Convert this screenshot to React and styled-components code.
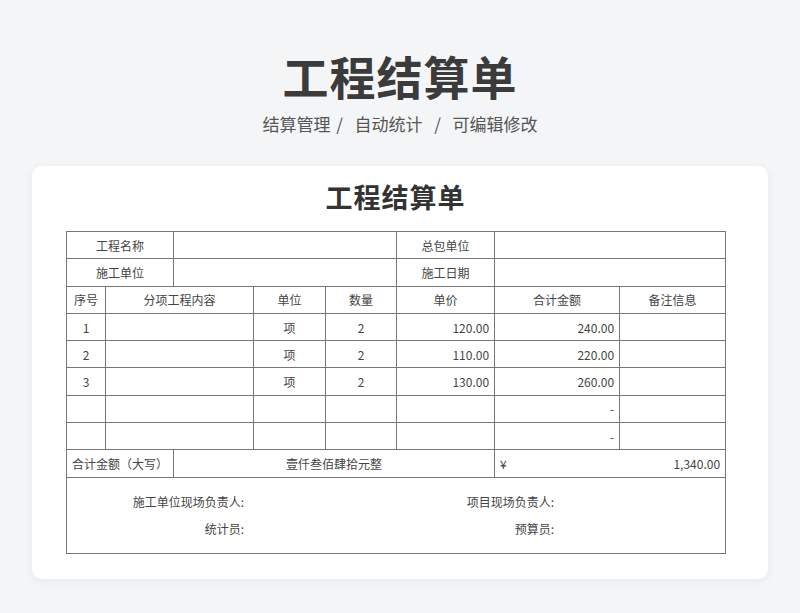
import styled, { createGlobalStyle } from 'styled-components';

const Global = createGlobalStyle`
  body { margin: 0; background: #f4f5f6; font-family: "Noto Sans CJK SC", "Noto Sans", sans-serif; }
`;

const Page = styled.div`
  width: 800px;
  height: 613px;
  display: flex;
  flex-direction: column;
  align-items: center;
  box-sizing: border-box;
  padding-top: 46px;
`;

const Title = styled.h1`
  margin: 0;
  font-size: 46px;
  line-height: 58px;
  font-weight: 700;
  color: #3b3b3b;
  letter-spacing: 1px;
`;

const Subtitle = styled.div`
  margin-top: 8px;
  font-size: 17px;
  line-height: 24px;
  color: #555;
  word-spacing: 2px;
`;

const Card = styled.div`
  margin-top: 30px;
  width: 736px;
  height: 413px;
  background: #fff;
  border-radius: 10px;
  box-shadow: 0 2px 10px rgba(0, 0, 0, 0.06);
  box-sizing: border-box;
  padding: 12px 43px 0 34px;
  display: flex;
  flex-direction: column;
`;

const CardTitle = styled.h2`
  margin: 0;
  text-align: center;
  font-size: 27px;
  line-height: 38px;
  font-weight: 700;
  color: #333;
  letter-spacing: 1px;
`;

const Table = styled.table`
  margin-top: 15px;
  width: 659px;
  border-collapse: collapse;
  table-layout: fixed;
  border: 1px solid #555;
  font-size: 12px;
  color: #444;
`;

const Cell = styled.td`
  border: 1px solid #777;
  height: 26.3px;
  padding: 0 5px;
  text-align: ${(p) => p.$align || 'center'};
  white-space: nowrap;
`;

const Split = styled.div`
  display: flex;
  justify-content: space-between;
`;

const Footer = styled.td`
  border: 1px solid #777;
  height: 75px;
  padding: 0;
`;

const Signs = styled.div`
  display: grid;
  grid-template-columns: 177px 133px 177px 133px;
  row-gap: 8px;
  font-size: 12px;
  color: #444;
  line-height: 19px;
`;

const Label = styled.div`
  text-align: right;
`;

const rows = [
  ['1', '项', '2', '120.00', '240.00'],
  ['2', '项', '2', '110.00', '220.00'],
  ['3', '项', '2', '130.00', '260.00'],
  ['', '', '', '', '-'],
  ['', '', '', '', '-'],
];

export default function App() {
  return (
    <Page>
      <Global />
      <Title>工程结算单</Title>
      <Subtitle>结算管理 /&nbsp; 自动统计 &nbsp;/ &nbsp;可编辑修改</Subtitle>
      <Card>
        <CardTitle>工程结算单</CardTitle>
        <Table>
          <colgroup>
            <col style={{ width: 39 }} />
            <col style={{ width: 68 }} />
            <col style={{ width: 80 }} />
            <col style={{ width: 72 }} />
            <col style={{ width: 71 }} />
            <col style={{ width: 98 }} />
            <col style={{ width: 125 }} />
            <col style={{ width: 106 }} />
          </colgroup>
          <tbody>
            <tr>
              <Cell colSpan={2}>工程名称</Cell>
              <Cell colSpan={3}></Cell>
              <Cell>总包单位</Cell>
              <Cell colSpan={2}></Cell>
            </tr>
            <tr>
              <Cell colSpan={2}>施工单位</Cell>
              <Cell colSpan={3}></Cell>
              <Cell>施工日期</Cell>
              <Cell colSpan={2}></Cell>
            </tr>
            <tr>
              <Cell>序号</Cell>
              <Cell colSpan={2}>分项工程内容</Cell>
              <Cell>单位</Cell>
              <Cell>数量</Cell>
              <Cell>单价</Cell>
              <Cell>合计金额</Cell>
              <Cell>备注信息</Cell>
            </tr>
            {rows.map((r, i) => (
              <tr key={i}>
                <Cell>{r[0]}</Cell>
                <Cell colSpan={2}></Cell>
                <Cell>{r[1]}</Cell>
                <Cell>{r[2]}</Cell>
                <Cell $align="right">{r[3]}</Cell>
                <Cell $align="right">{r[4]}</Cell>
                <Cell></Cell>
              </tr>
            ))}
            <tr>
              <Cell colSpan={2}>合计金额（大写）</Cell>
              <Cell colSpan={4}>壹仟叁佰肆拾元整</Cell>
              <Cell colSpan={2}>
                <Split>
                  <span>¥</span>
                  <span>1,340.00</span>
                </Split>
              </Cell>
            </tr>
            <tr>
              <Footer colSpan={8}>
                <Signs>
                  <Label>施工单位现场负责人:</Label>
                  <div />
                  <Label>项目现场负责人:</Label>
                  <div />
                  <Label>统计员:</Label>
                  <div />
                  <Label>预算员:</Label>
                  <div />
                </Signs>
              </Footer>
            </tr>
          </tbody>
        </Table>
      </Card>
    </Page>
  );
}
